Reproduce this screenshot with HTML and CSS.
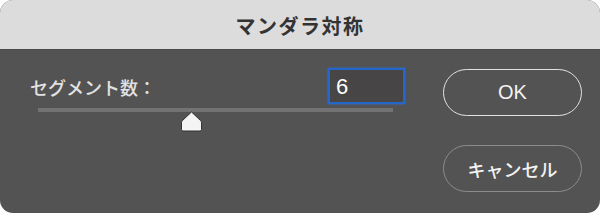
FILE: index.html
```html
<!DOCTYPE html>
<html lang="ja">
<head>
  <meta charset="UTF-8">
  <title>マンダラ対称</title>
  <link rel="stylesheet" href="styles.css">
</head>
<body>
  <div class="dialog">
    <div class="title-bar">マンダラ対称</div>
    <div class="dialog-body">
      <div class="settings">
        <div class="field-row">
          <label for="segments">セグメント数：</label>
          <input type="text" id="segments" value="6">
        </div>
        <div class="slider">
          <div class="track"></div>
          <div class="thumb" style="left: 43%">
            <svg width="23" height="21" viewBox="0 0 23 21">
              <path d="M11.5 1 L20.5 9.5 Q21.5 10.4 21.5 11.8 L21.5 18.5 Q21.5 20 20 20 L3 20 Q1.5 20 1.5 18.5 L1.5 11.8 Q1.5 10.4 2.5 9.5 Z" fill="#f4f4f4" stroke="#333333" stroke-width="1"/>
            </svg>
          </div>
        </div>
      </div>
      <div class="buttons">
        <button class="btn btn-ok">OK</button>
        <button class="btn btn-cancel">キャンセル</button>
      </div>
    </div>
  </div>
</body>
</html>
```

FILE: styles.css
```css
body {
  margin: 0;
  background: #ffffff;
  font-family: "Liberation Sans", "Noto Sans CJK JP", sans-serif;
}

.dialog {
  width: 600px;
  height: 213px;
  border-radius: 13px;
  overflow: hidden;
  background: #535353;
  display: flex;
  flex-direction: column;
}

.title-bar {
  height: 50px;
  background: #dcdcdc;
  color: #333333;
  font-size: 20px;
  font-weight: bold;
  letter-spacing: 1.5px;
  display: flex;
  align-items: center;
  justify-content: center;
  padding-top: 2px;
  box-sizing: border-box;
  border-bottom: 1px solid #4a4a4a;
}

.dialog-body {
  display: flex;
  padding: 18px 18px 0 30px;
  gap: 38px;
}

.settings {
  width: 375px;
}

.field-row {
  display: flex;
  align-items: center;
  justify-content: space-between;
  height: 36px;
}

.field-row label {
  color: #e2e2e2;
  font-size: 18px;
  font-weight: 500;
  padding-top: 2px;
}

.field-row input {
  width: 77px;
  height: 36px;
  box-sizing: border-box;
  border: 2px solid #2766c9;
  box-shadow: 0 0 2px #2f74e0;
  background: #474545;
  color: #ffffff;
  font-family: inherit;
  font-size: 22px;
  padding: 2px 0 0 6px;
  outline: none;
}

.slider {
  position: relative;
  margin: 4px 0 0 8px;
  width: 355px;
  height: 26px;
}

.track {
  height: 4px;
  background: #737373;
}

.thumb {
  position: absolute;
  top: 3px;
  margin-left: -11px;
  width: 23px;
  height: 21px;
}

.thumb svg {
  display: block;
}

.buttons {
  display: flex;
  flex-direction: column;
  gap: 29px;
  padding-top: 1px;
}

.btn {
  width: 139px;
  height: 47px;
  border-radius: 24px;
  background: transparent;
  color: #f2f2f2;
  font-family: inherit;
  font-size: 18px;
  cursor: pointer;
}

.btn-ok {
  border: 1.5px solid #e2e2e2;
  font-size: 20px;
}

.btn-cancel {
  border: 1.5px solid #8c8c8c;
  font-weight: 500;
}
```
